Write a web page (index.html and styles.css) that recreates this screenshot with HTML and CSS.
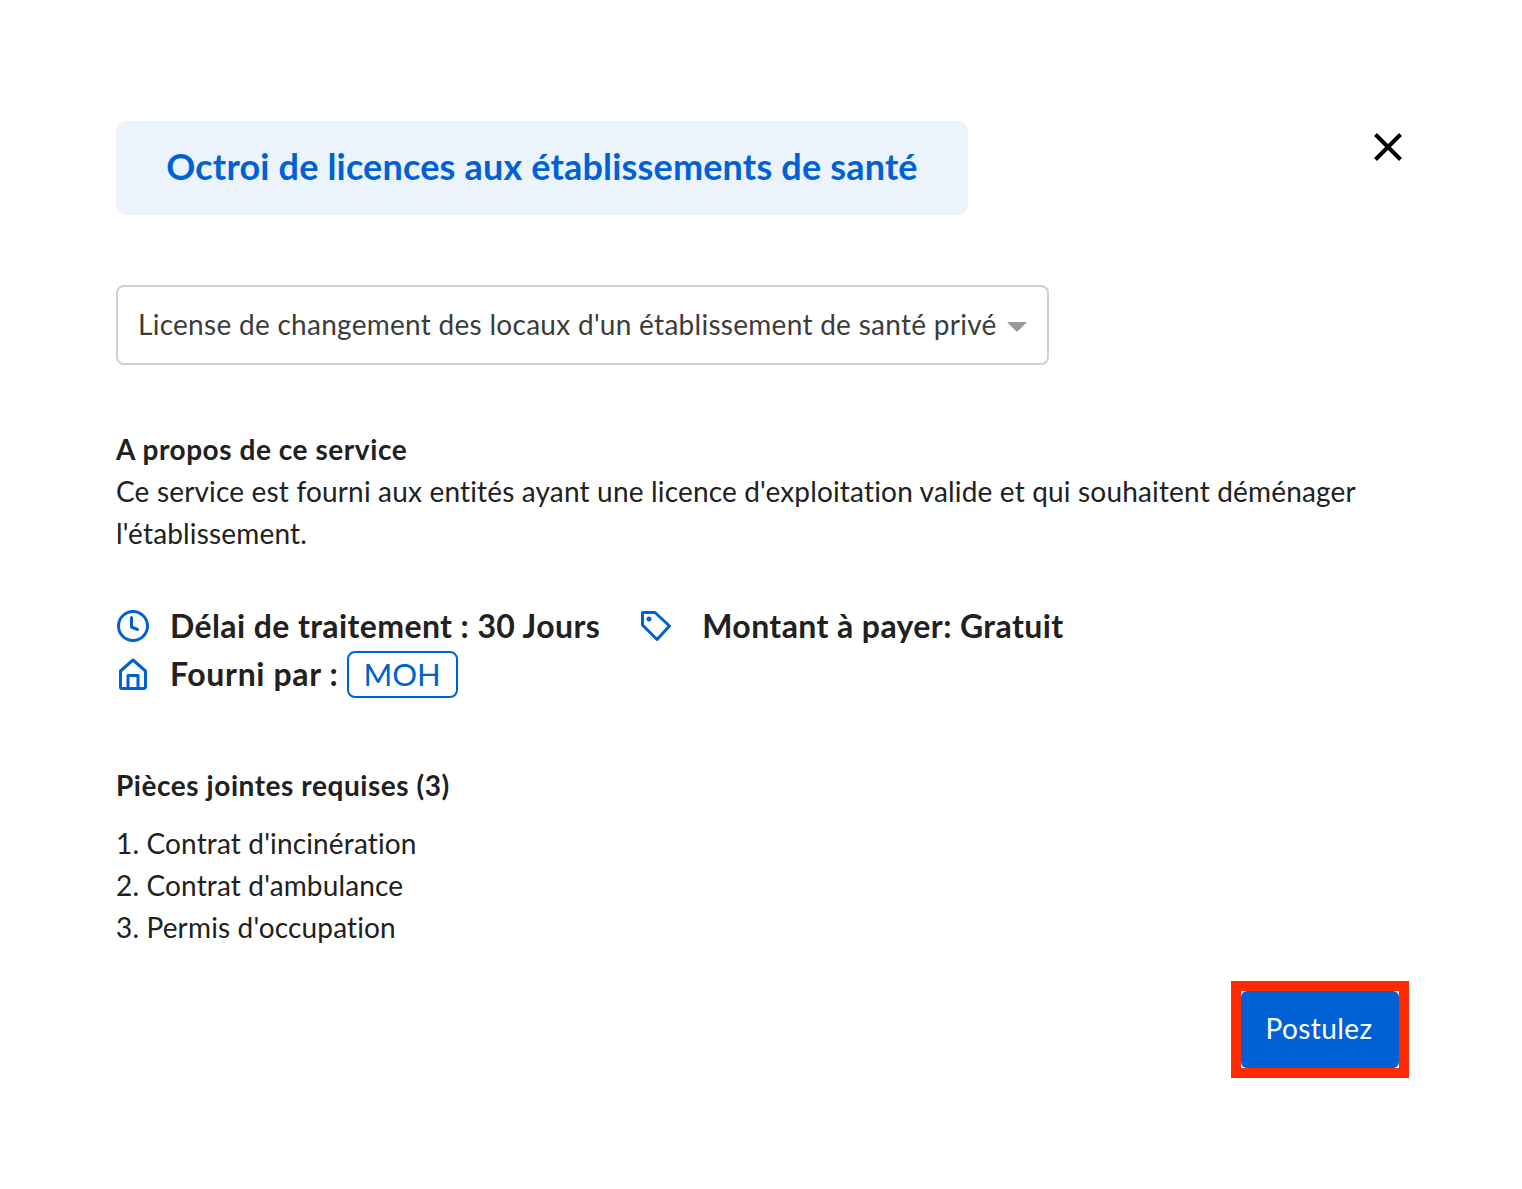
FILE: index.html
```html
<!DOCTYPE html>
<html lang="fr">
<head>
    <meta charset="UTF-8">
    <title>Octroi de licences</title>
    <link rel="stylesheet" href="styles.css">
</head>
<body>
    <div class="modal">
        <div class="modal-header">
            <h2 class="modal-title">Octroi de licences aux établissements de santé</h2>
            <button class="close-btn" type="button" aria-label="Fermer">
                <svg width="30" height="30" viewBox="0 0 30 30"><path d="M2.5 2.5 L27.5 27.5 M27.5 2.5 L2.5 27.5" stroke="#000" stroke-width="4" fill="none"/></svg>
            </button>
        </div>
        <div class="select-box">
            <span>License de changement des locaux d'un établissement de santé privé</span>
            <span class="caret"></span>
        </div>
        <div class="about">
            <h3 class="section-title">A propos de ce service</h3>
            <p>Ce service est fourni aux entités ayant une licence d'exploitation valide et qui souhaitent déménager l'établissement.</p>
        </div>
        <div class="meta">
            <div class="meta-row">
                <div class="meta-item">
                    <svg class="icon" width="34" height="34" viewBox="0 0 34 34" fill="none" stroke="#0061d5" stroke-width="3" stroke-linecap="round" stroke-linejoin="round"><circle cx="17" cy="17" r="14.5"/><path d="M15.5 8.5V18L21.5 20.5"/></svg>
                    <span>Délai de traitement : 30 Jours</span>
                </div>
                <div class="meta-item price">
                    <svg class="icon" width="34" height="34" viewBox="0 0 34 34" fill="none" stroke="#0061d5" stroke-width="3" stroke-linecap="round" stroke-linejoin="round"><path d="M4.500 3.500H17L31.500 17 19 30.500 4.500 16Z"/><circle cx="11" cy="10" r="1" fill="#0061d5"/></svg>
                    <span>Montant à payer: Gratuit</span>
                </div>
            </div>
            <div class="meta-row">
                <div class="meta-item">
                    <svg class="icon" width="34" height="34" viewBox="0 0 34 34" fill="none" stroke="#0061d5" stroke-width="3" stroke-linecap="round" stroke-linejoin="round"><path d="M4.500 14 17 3 29.500 14V30a1.500 1.500 0 0 1-1.500 1.500H6A1.500 1.500 0 0 1 4.500 30Z"/><path d="M12 31V18.500H22V31"/></svg>
                    <span class="provider">Fourni par :</span>
                    <span class="tag">MOH</span>
                </div>
            </div>
        </div>
        <div class="attachments">
            <h3 class="section-title">Pièces jointes requises (3)</h3>
            <ol class="attach-list">
                <li>Contrat d'incinération</li>
                <li>Contrat d'ambulance</li>
                <li>Permis d'occupation</li>
            </ol>
        </div>
        <div class="actions">
            <div class="highlight">
                <button class="apply-btn" type="button">Postulez</button>
            </div>
        </div>
    </div>
</body>
</html>
```
FILE: styles.css
```css
html, body {
    margin: 0;
    padding: 0;
    background-color: #fff;
}
body {
    font-family: "Lato", "Noto Sans", sans-serif;
    color: #212121;
    font-size: 28px;
    line-height: 42px;
}
.modal {
    padding: 121px 113px 0 116px;
}
.modal-header {
    display: flex;
    justify-content: space-between;
    align-items: flex-start;
}
.modal-title {
    margin: 0;
    width: 852px;
    height: 94px;
    box-sizing: border-box;
    background-color: #ebf3fc;
    border-radius: 10px;
    color: #0061d5;
    font-size: 36px;
    line-height: 90px;
    font-weight: 700;
    letter-spacing: 0.17px;
    text-align: center;
}
.close-btn {
    border: none;
    background: none;
    padding: 0;
    margin: 11px 6px 0 0;
    width: 30px;
    height: 30px;
    line-height: 0;
}
.select-box {
    display: flex;
    align-items: center;
    gap: 10px;
    width: 933px;
    height: 80px;
    box-sizing: border-box;
    margin-top: 70px;
    padding: 0 20px 2px;
    border: 2px solid #d0d0d0;
    border-radius: 8px;
    color: #3c3c3c;
    letter-spacing: 0.28px;
    white-space: nowrap;
}
.caret {
    width: 0;
    height: 0;
    margin-top: 6px;
    border-left: 10px solid transparent;
    border-right: 10px solid transparent;
    border-top: 10px solid #999;
}
.about {
    margin-top: 63px;
}
.section-title {
    margin: 0;
    font-size: 28px;
    font-weight: 700;
    line-height: 42px;
    letter-spacing: 0.56px;
}
.about p {
    margin: 0;
    letter-spacing: 0.17px;
}
.meta {
    margin-top: 48px;
    font-size: 32px;
    font-weight: 700;
    line-height: 48px;
    letter-spacing: 0.4px;
}
.meta-row {
    display: flex;
    align-items: center;
    gap: 38px;
}
.meta-item {
    display: flex;
    align-items: center;
}
.icon {
    margin-right: 20px;
    flex-shrink: 0;
}
.price .icon {
    margin-right: 30px;
}
.provider {
    letter-spacing: 0.65px;
}
.tag {
    margin-left: 8px;
    padding: 0 15px;
    height: 47px;
    font-size: 31px;
    line-height: 43px;
    letter-spacing: 0;
    box-sizing: border-box;
    border: 2px solid #0061d5;
    border-radius: 8px;
    color: #0061d5;
    font-weight: 400;
}
.attachments {
    margin-top: 66px;
}
.attach-list {
    margin: 16px 0 0;
    padding: 0;
    list-style-position: inside;
    letter-spacing: 0.15px;
}
.actions {
    display: flex;
    justify-content: flex-end;
    margin-top: 33px;
}
.highlight {
    border: 10px solid #ff2a00;
}
.apply-btn {
    display: block;
    width: 158px;
    height: 77px;
    padding: 0 2px 4px 0;
    border: none;
    border-radius: 6px;
    background-color: #0061d5;
    color: #fff;
    font-family: inherit;
    font-size: 28px;
    letter-spacing: 0.4px;
}
```
